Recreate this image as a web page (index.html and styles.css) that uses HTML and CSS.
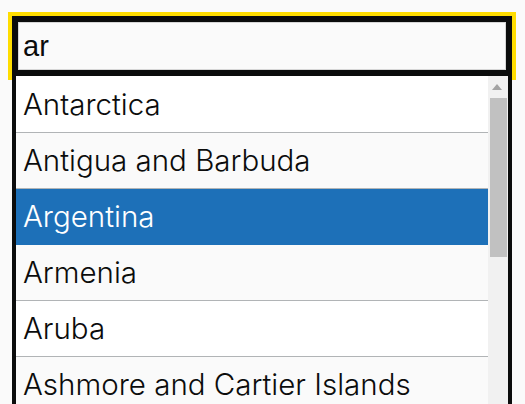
FILE: index.html
```html
<!DOCTYPE html>
<html lang="en">
<head>
    <meta charset="UTF-8">
    <meta name="viewport" content="width=device-width, initial-scale=1.0">
    <title>Country autocomplete</title>
    <link rel="stylesheet" href="styles.css">
</head>
<body>
    <div class="autocomplete">
        <div class="field">
            <input class="field-input" type="text" name="country" id="country" value="ar" autocomplete="off">
        </div>
        <div class="menu">
            <ul class="options">
                <li class="option">Antarctica</li>
                <li class="option option-odd">Antigua and Barbuda</li>
                <li class="option option-focused">Argentina</li>
                <li class="option option-odd">Armenia</li>
                <li class="option">Aruba</li>
                <li class="option option-odd">Ashmore and Cartier Islands</li>
            </ul>
            <div class="scrollbar">
                <span class="scroll-up"></span>
                <span class="scroll-thumb"></span>
            </div>
        </div>
    </div>
</body>
</html>
```

FILE: styles.css
```css
html, body {
    overflow: hidden;
}

body {
    margin: 0;
    padding: 16px 13px 0 12px;
    background-color: #fafafa;
    color: #0b0c0c;
}

.autocomplete {
    width: 500px;
}

.field {
    box-shadow: 0 0 0 4px #ffdd00;
}

.field-input {
    display: block;
    box-sizing: border-box;
    width: 100%;
    height: 60px;
    margin: 0;
    padding: 0 5px;
    border: 6px solid #0b0c0c;
    border-radius: 0;
    box-shadow: inset 0 0 0 1px #d6d6d6;
    background-color: #fafafa;
    color: #0b0c0c;
    font-family: "Liberation Sans", Arial, sans-serif;
    font-size: 29px;
    outline: none;
}

.menu {
    position: relative;
    z-index: 1;
    display: flex;
    border: 4px solid #0b0c0c;
    border-top: 0;
    background-color: #fff;
}

.options {
    flex: 1;
    margin: 0;
    padding: 0;
    list-style: none;
}

.option {
    padding: 11px 8px 11px 7px;
    border-bottom: 1px solid #b1b4b6;
    font-family: Inter, "Open Sans", sans-serif;
    font-size: 29.5px;
    font-weight: 300;
    line-height: 33px;
    white-space: nowrap;
}

.option:first-child {
    padding-top: 12px;
}

.option-odd {
    background-color: #fafafa;
}

.option-focused {
    background-color: #1d70b8;
    border-color: #1d70b8;
    color: #fff;
}

.scrollbar {
    flex: 0 0 20px;
    display: flex;
    flex-direction: column;
    align-items: flex-start;
    background-color: #f1f1f1;
}

.scroll-up {
    width: 20px;
    height: 22px;
    position: relative;
}

.scroll-up::before {
    content: "";
    position: absolute;
    left: 4px;
    top: 8px;
    border-left: 5px solid transparent;
    border-right: 5px solid transparent;
    border-bottom: 6px solid #a3a3a3;
}

.scroll-thumb {
    width: 17px;
    height: 159px;
    margin-left: 2px;
    background-color: #c1c1c1;
}
```
